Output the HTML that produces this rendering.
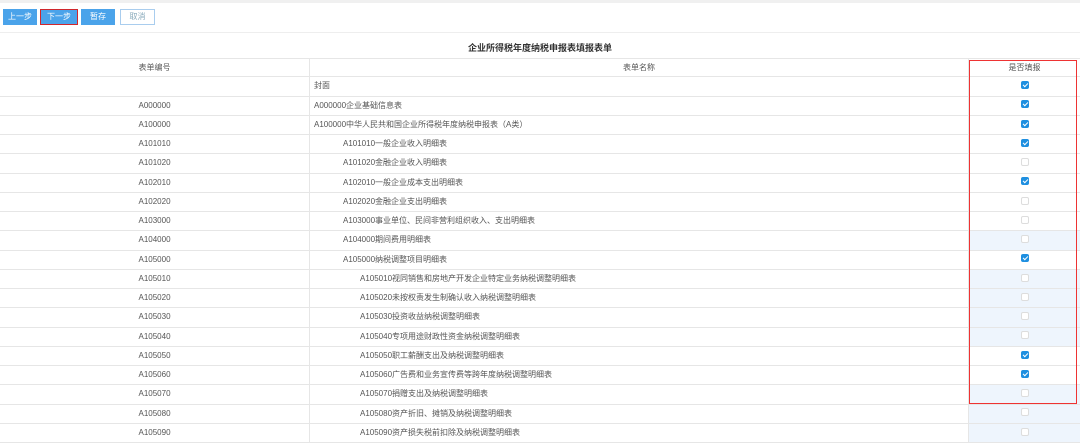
<!DOCTYPE html><html><head><meta charset="utf-8"><style>
body{margin:0;width:1080px;height:434px;overflow:hidden;background:#fff;font-family:"Liberation Sans","Noto Sans CJK SC",sans-serif;font-size:8px;color:#555;position:relative}
.top{position:absolute;left:0;top:0;width:1080px;height:3px;background:#f0f0f0}
.btn{position:absolute;top:9px;height:16px;line-height:16px;text-align:center;color:#fff;background:#4aa3ea;font-size:8px;box-sizing:border-box}
.hl{position:absolute;left:0;top:32px;width:1080px;height:1px;background:#eee}
.title{position:absolute;top:41px;left:0;width:1080px;text-align:center;font-size:9px;color:#333;font-weight:bold}
.row{position:absolute;left:0;width:1080px;height:19.25px;border-bottom:1px solid #e6e6e6;box-sizing:border-box}
.c{position:absolute;top:0;height:100%;line-height:18px;box-sizing:border-box}
.c1{left:0;width:310px;text-align:center;border-right:1px solid #e6e6e6}
.c2{left:310px;width:659px;border-right:1px solid #e6e6e6}
.c3{left:969px;width:111px;text-align:center}
.cb{display:inline-block;width:8px;height:8px;border-radius:2px;vertical-align:middle;box-sizing:border-box;border:1px solid #ddd;background:#fff;position:relative;top:-1px}
.cb.on{background:#1e8fe0;border-color:#1e8fe0}
.cb.on:after{content:"";position:absolute;left:2px;top:0px;width:2px;height:4px;border:solid #fff;border-width:0 1px 1px 0;transform:rotate(45deg)}
.t{background:#eef5fd}
.red{position:absolute;left:969px;top:60px;width:108px;height:344px;border:1px solid #e33;box-sizing:border-box}
</style></head><body>
<div class="top"></div>
<div class="btn" style="left:3px;width:34px">上一步</div>
<div class="btn" style="left:40px;width:38px;border:1px solid #d0262c;line-height:14px">下一步</div>
<div class="btn" style="left:81px;width:34px">暂存</div>
<div class="btn" style="left:120px;width:35px;background:#fff;color:#8ab;border:1px solid #a9cdee;line-height:14px">取消</div>
<div class="hl"></div>
<div class="title">企业所得税年度纳税申报表填报表单</div>
<div id="tb"></div>
<div class="red"></div>
<script>
var rows=[["表单编号","表单名称",-1,0],["","封面",1,0],["A000000","A000000企业基础信息表",1,0],["A100000","A100000中华人民共和国企业所得税年度纳税申报表（A类）",1,0],
["A101010","A101010一般企业收入明细表",1,1],["A101020","A101020金融企业收入明细表",0,1],["A102010","A102010一般企业成本支出明细表",1,1],["A102020","A102020金融企业支出明细表",0,1],
["A103000","A103000事业单位、民间非营利组织收入、支出明细表",0,1],["A104000","A104000期间费用明细表",0,1],["A105000","A105000纳税调整项目明细表",1,1],
["A105010","A105010视同销售和房地产开发企业特定业务纳税调整明细表",0,2],["A105020","A105020未按权责发生制确认收入纳税调整明细表",0,2],["A105030","A105030投资收益纳税调整明细表",0,2],
["A105040","A105040专项用途财政性资金纳税调整明细表",0,2],["A105050","A105050职工薪酬支出及纳税调整明细表",1,2],["A105060","A105060广告费和业务宣传费等跨年度纳税调整明细表",1,2],
["A105070","A105070捐赠支出及纳税调整明细表",0,2],["A105080","A105080资产折旧、摊销及纳税调整明细表",0,2],["A105090","A105090资产损失税前扣除及纳税调整明细表",0,2]];
var h="";rows.forEach(function(r,i){var y=58+i*19.25;var ind=[4,33,50][r[3]];
var tint=(i>=9&&r[2]==0)?" t":"";
var c3=r[2]<0?"是否填报":'<span class="cb'+(r[2]?" on":"")+'"></span>';
h+='<div class="row" style="top:'+y+'px'+(i==0?';border-top:1px solid #e6e6e6':'')+'"><div class="c c1">'+r[0]+'</div><div class="c c2" style="padding-left:'+(r[2]<0?0:ind)+'px;'+(r[2]<0?'text-align:center':'')+'">'+r[1]+'</div><div class="c c3'+tint+'">'+c3+'</div></div>';});
document.getElementById("tb").innerHTML=h;
</script>
</body></html>
